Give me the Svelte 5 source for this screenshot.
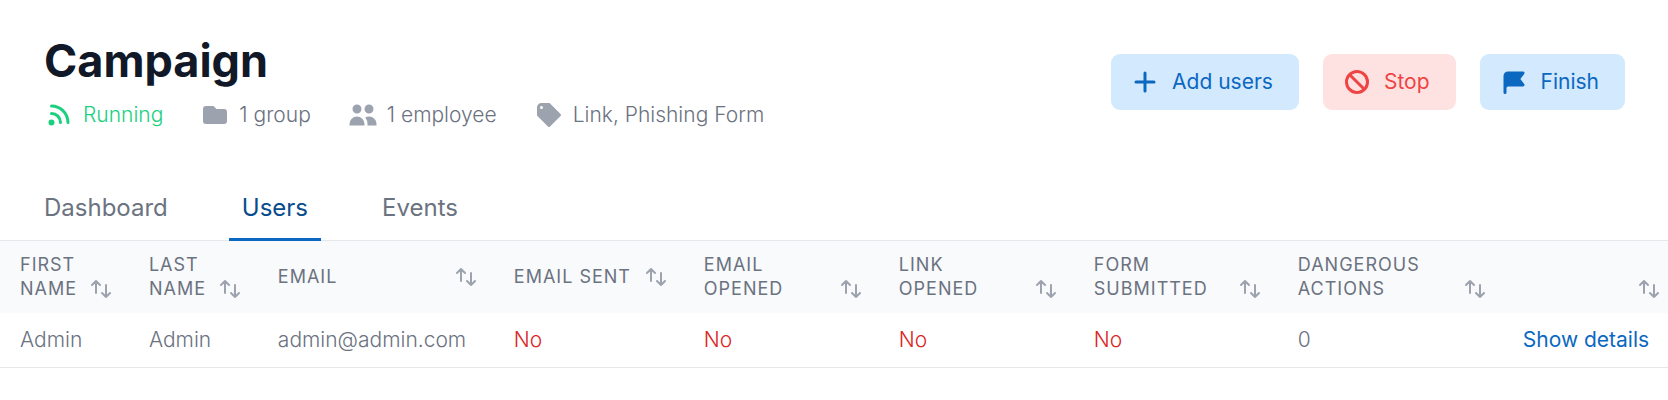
<script>
	const icons = {
		rss: 'M5 3a1 1 0 000 2c5.523 0 10 4.477 10 10a1 1 0 102 0C17 8.373 11.627 3 5 3zM4 9a1 1 0 011-1 7 7 0 017 7 1 1 0 11-2 0 5 5 0 00-5-5 1 1 0 01-1-1zM3 15a2 2 0 114 0 2 2 0 01-4 0z',
		folder: 'M2 6a2 2 0 012-2h5l2 2h5a2 2 0 012 2v6a2 2 0 01-2 2H4a2 2 0 01-2-2V6z',
		users: 'M9 6a3 3 0 11-6 0 3 3 0 016 0zM17 6a3 3 0 11-6 0 3 3 0 016 0zM12.93 17c.046-.327.07-.66.07-1a6.97 6.97 0 00-1.5-4.33A5 5 0 0119 16v1h-6.07zM6 11a5 5 0 015 5v1H1v-1a5 5 0 015-5z',
		tag: 'M17.707 9.293a1 1 0 010 1.414l-7 7a1 1 0 01-1.414 0l-7-7A.997.997 0 012 10V5a3 3 0 013-3h5c.256 0 .512.098.707.293l7 7zM5 6a1 1 0 100-2 1 1 0 000 2z',
		plus: 'M10 3a1 1 0 011 1v5h5a1 1 0 110 2h-5v5a1 1 0 11-2 0v-5H4a1 1 0 110-2h5V4a1 1 0 011-1z',
		ban: 'M13.477 14.89A6 6 0 015.11 6.524l8.367 8.368zm1.414-1.414L6.524 5.11a6 6 0 018.367 8.367zM18 10a8 8 0 11-16 0 8 8 0 0116 0z',
		flag: 'M3 6a3 3 0 013-3h10a1 1 0 01.8 1.6L14.25 8l2.55 3.4A1 1 0 0116 13H6a1 1 0 00-1 1v3a1 1 0 11-2 0V6z'
	}

	const meta = [
		{ icon: 'rss', text: 'Running', running: true },
		{ icon: 'folder', text: '1 group' },
		{ icon: 'users', text: '1 employee' },
		{ icon: 'tag', text: 'Link, Phishing Form' }
	]

	const actions = [
		{ icon: 'plus', text: 'Add users' },
		{ icon: 'ban', text: 'Stop', danger: true },
		{ icon: 'flag', text: 'Finish' }
	]

	const tabs = ['Dashboard', 'Users', 'Events']
	let activeTab = $state('Users')

	// widths are percentages of the table
	const columns = [
		{ key: 'firstName', label: 'First\nname', width: 7.73 },
		{ key: 'lastName', label: 'Last\nname', width: 7.73 },
		{ key: 'email', label: 'Email', width: 14.15 },
		{ key: 'sent', label: 'Email sent', width: 11.39 },
		{ key: 'opened', label: 'Email\nopened', width: 11.69 },
		{ key: 'linkOpened', label: 'Link\nopened', width: 11.69 },
		{ key: 'submitted', label: 'Form\nsubmitted', width: 12.23 },
		{ key: 'dangerous', label: 'Dangerous\nactions', width: 13.49 },
		{ key: 'details', label: '', width: 9.9 }
	]

	let users = $state([
		{
			firstName: 'Admin',
			lastName: 'Admin',
			email: 'admin@admin.com',
			sent: false,
			opened: false,
			linkOpened: false,
			submitted: false,
			dangerous: 0
		}
	])

	const sortBy = (key) => {
		users.sort((a, b) => String(a[key]).localeCompare(String(b[key])))
	}
</script>

{#snippet icon(name)}
	<svg class="icon" viewBox="0 0 20 20" aria-hidden="true">
		<path fill-rule="evenodd" clip-rule="evenodd" d={icons[name]} />
	</svg>
{/snippet}

<header>
	<div>
		<h1>Campaign</h1>
		<ul class="meta">
			{#each meta as item}
				<li class:running={item.running}>
					{@render icon(item.icon)}
					{item.text}
				</li>
			{/each}
		</ul>
	</div>

	<div class="actions">
		{#each actions as action}
			<button class="action" class:danger={action.danger} type="button">
				{@render icon(action.icon)}
				{action.text}
			</button>
		{/each}
	</div>
</header>

<nav>
	{#each tabs as tab}
		<a
			href="#{tab.toLowerCase()}"
			class:active={tab === activeTab}
			onclick={() => (activeTab = tab)}>{tab}</a
		>
	{/each}
</nav>

<table>
	<colgroup>
		{#each columns as column}
			<col style="width: {column.width}%" />
		{/each}
	</colgroup>
	<thead>
		<tr>
			{#each columns as column}
				<th scope="col">
					<button
						class="sort"
						type="button"
						aria-label="Sort by {column.label || 'details'}"
						onclick={() => sortBy(column.key)}
					>
						<span>{column.label}</span>
						<svg class="arrows" viewBox="0 0 24 24" aria-hidden="true">
							<path d="M7 16V4m0 0L3 8m4-4l4 4m6 0v12m0 0l4-4m-4 4l-4-4" />
						</svg>
					</button>
				</th>
			{/each}
		</tr>
	</thead>
	<tbody>
		{#each users as user}
			<tr>
				{#each columns as { key }}
					{#if key === 'details'}
						<td class="details"><a href="#details">Show details</a></td>
					{:else if user[key] === false}
						<td class="no">No</td>
					{:else}
						<td>{user[key]}</td>
					{/if}
				{/each}
			</tr>
		{/each}
	</tbody>
</table>

<style>
	:global(body) {
		background: white;
		color: #6b7280;
		font-family: Inter, 'Liberation Sans', sans-serif;
		font-size: 21px;
		line-height: 30px;
	}

	header {
		display: flex;
		align-items: center;
		justify-content: space-between;
		gap: 24px;
		padding: 34px 43px 0 44px;
	}

	h1 {
		margin: 0 0 12px;
		color: #111827;
		font-size: 45px;
		font-weight: 700;
		line-height: 54px;
	}

	.icon {
		flex: none;
		width: 30px;
		height: 30px;
		fill: currentColor;
	}

	.meta {
		display: flex;
		flex-wrap: wrap;
		gap: 0 37px;
		margin: 0;
		padding: 0;
		list-style: none;
		font-weight: 300;
	}

	.meta li {
		display: flex;
		align-items: center;
		gap: 9px;
	}

	.meta .icon {
		fill: #9ca3af;
	}

	.meta .running,
	.meta .running .icon {
		color: #1ad07f;
		fill: #1ad07f;
	}

	.actions {
		display: flex;
		flex: none;
		gap: 24px;
	}

	.action {
		display: flex;
		align-items: center;
		gap: 12px;
		padding: 13px 26px 13px 19px;
		border: 0;
		border-radius: 9px;
		background: #d3e9fd;
		color: #0b68c1;
		font: inherit;
		cursor: pointer;
	}

	.action.danger {
		background: #fee2e2;
		color: #ef4444;
	}

	nav {
		display: flex;
		gap: 48px;
		margin-top: 60px;
		padding: 0 31px;
		border-bottom: 1px solid #e5e7eb;
	}

	nav a {
		margin-bottom: -1px;
		padding: 0 13px 12px;
		border-bottom: 3px solid transparent;
		color: #6b7280;
		font-size: 24px;
		line-height: 36px;
		text-decoration: none;
	}

	nav a.active {
		border-color: #0b68c1;
		color: #084c8d;
	}

	table {
		width: 100%;
		table-layout: fixed;
		border-collapse: collapse;
	}

	thead {
		background: #f9fafc;
	}

	th {
		padding: 12px 16px 12px 20px;
	}

	th:last-child {
		padding-right: 7px;
	}

	.sort {
		display: flex;
		align-items: flex-end;
		justify-content: space-between;
		width: 100%;
		min-height: 24px;
		padding: 0;
		border: 0;
		background: none;
		color: #6b7280;
		font: inherit;
		font-size: 18px;
		font-weight: 400;
		line-height: 24px;
		letter-spacing: 1px;
		text-align: left;
		text-transform: uppercase;
		white-space: pre-line;
		cursor: pointer;
	}

	th:last-child .sort {
		min-height: 48px;
	}

	.arrows {
		flex: none;
		width: 24px;
		height: 24px;
		fill: none;
		stroke: #9ca3af;
		stroke-width: 2;
		stroke-linecap: round;
		stroke-linejoin: round;
	}

	td {
		padding: 12px 19px 12px 20px;
		border-bottom: 1px solid #e5e7eb;
		font-weight: 300;
		white-space: nowrap;
	}

	td.no {
		color: #dc2626;
	}

	.details {
		font-weight: 400;
		text-align: right;
	}

	.details a {
		color: #0b68c1;
		text-decoration: none;
	}
</style>
